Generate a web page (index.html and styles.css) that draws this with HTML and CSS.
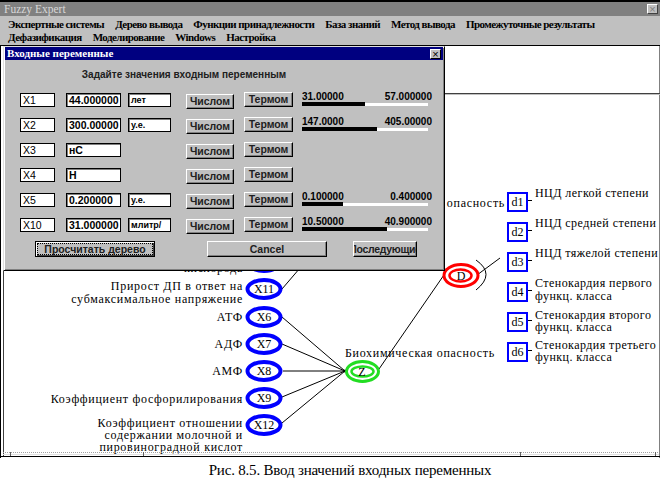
FILE: index.html
```html
<!DOCTYPE html>
<html lang="ru">
<head>
<meta charset="utf-8">
<title>Fuzzy Expert</title>
<link rel="stylesheet" href="styles.css">
</head>
<body>
<div class="app">
  <div class="titlebar">
    <span class="app-title">Fuzzy Expert</span>
    <span class="close-btn">×</span>
  </div>
  <div class="menubar">
    <div class="menu-row">
      <span>Экспертные системы</span>
      <span>Дерево вывода</span>
      <span>Функции принадлежности</span>
      <span>База знаний</span>
      <span>Метод вывода</span>
      <span>Промежуточные результаты</span>
    </div>
    <div class="menu-row">
      <span>Дефазификация</span>
      <span>Моделирование</span>
      <span>Windows</span>
      <span>Настройка</span>
    </div>
  </div>
  <div class="client">
    <svg class="diagram" width="660" height="412" viewBox="0 46 660 412">
      <g class="frame">
        <line x1="0.5" y1="46" x2="0.5" y2="458" stroke="#000"/>
        <line x1="3.5" y1="93" x2="3.5" y2="456" stroke="#404040"/>
        <line x1="659.5" y1="46" x2="659.5" y2="458" stroke="#808080"/>
        <line x1="3" y1="93.5" x2="660" y2="93.5" stroke="#404040"/>
        <line x1="3" y1="94.5" x2="660" y2="94.5" stroke="#c0c0c0"/>
      </g>
      <g class="edges">
        <line x1="282" y1="262" x2="330" y2="215"/>
        <line x1="282" y1="289" x2="330" y2="233"/>
        <line x1="282" y1="317" x2="345" y2="371"/>
        <line x1="282" y1="344" x2="345" y2="371"/>
        <line x1="283" y1="371" x2="345" y2="371"/>
        <line x1="282" y1="397" x2="345" y2="371"/>
        <line x1="282" y1="423" x2="345" y2="371"/>
        <line x1="379" y1="369" x2="446" y2="272"/>
        <line x1="400" y1="215" x2="446" y2="270"/>
        <line x1="477" y1="275" x2="500" y2="258"/>
        <path d="M476 260 Q496 274 476 290"/>
        <line x1="528" y1="200.5" x2="532" y2="200.5"/>
        <line x1="528" y1="230.5" x2="532" y2="230.5"/>
        <line x1="528" y1="260.5" x2="532" y2="260.5"/>
        <line x1="528" y1="290.5" x2="532" y2="290.5"/>
        <line x1="528" y1="320.5" x2="532" y2="320.5"/>
        <line x1="528" y1="350.5" x2="532" y2="350.5"/>
      </g>
      <circle cx="345" cy="371" r="1.5" fill="#000"/>

      <g class="xnodes">
        <ellipse cx="264" cy="262" rx="16.5" ry="9"/>
        <ellipse cx="264" cy="289" rx="16.5" ry="9"/>
        <ellipse cx="264" cy="317" rx="16.5" ry="9"/>
        <ellipse cx="264" cy="344" rx="16.5" ry="9"/>
        <ellipse cx="264" cy="371" rx="16.5" ry="9"/>
        <ellipse cx="264" cy="398" rx="16.5" ry="9"/>
        <ellipse cx="264" cy="425" rx="16.5" ry="9"/>
      </g>
      <g class="node-txt">
        <text x="264" y="293">X11</text>
        <text x="264" y="321">X6</text>
        <text x="264" y="348">X7</text>
        <text x="264" y="375">X8</text>
        <text x="264" y="402">X9</text>
        <text x="264" y="429">X12</text>
      </g>
      <g class="lbl-left">
        <text x="243" y="272">кислорода</text>
        <text x="243" y="290">Прирост ДП в ответ на</text>
        <text x="243" y="303">субмаксимальное напряжение</text>
        <text x="243" y="321">АТФ</text>
        <text x="243" y="348">АДФ</text>
        <text x="243" y="375">АМФ</text>
        <text x="243" y="403">Коэффициент фосфорилирования</text>
        <text x="243" y="427">Коэффициент отношении</text>
        <text x="243" y="439">содержании молочной и</text>
        <text x="243" y="451">пировиноградной кислот</text>
        <text x="505" y="207">Физиологическая опасность</text>
      </g>

      <g class="znode">
        <ellipse cx="362.5" cy="371.5" rx="16" ry="10"/>
        <ellipse class="inner" cx="362.5" cy="371.5" rx="11" ry="5"/>
      </g>
      <text class="node-txt-one" x="362" y="376">Z</text>
      <text class="lbl" x="345" y="357">Биохимическая опасность</text>

      <g class="dnode">
        <ellipse cx="461" cy="275.5" rx="17" ry="11"/>
        <ellipse class="inner" cx="460.5" cy="275.5" rx="11" ry="6"/>
      </g>
      <text class="node-txt-one" x="461" y="280">D</text>

      <g class="dbox">
        <rect x="508" y="193" width="19" height="18"/>
        <rect x="508" y="223" width="19" height="18"/>
        <rect x="508" y="253" width="19" height="18"/>
        <rect x="508" y="283" width="19" height="18"/>
        <rect x="508" y="313" width="19" height="18"/>
        <rect x="508" y="343" width="19" height="18"/>
      </g>
      <g class="node-txt">
        <text x="517.5" y="206">d1</text>
        <text x="517.5" y="236">d2</text>
        <text x="517.5" y="266">d3</text>
        <text x="517.5" y="296">d4</text>
        <text x="517.5" y="326">d5</text>
        <text x="517.5" y="356">d6</text>
      </g>
      <g class="lbl lbl-right">
        <text x="535" y="197">НЦД легкой степени</text>
        <text x="535" y="227">НЦД средней степени</text>
        <text x="535" y="257">НЦД тяжелой степени</text>
        <text x="535" y="287">Стенокардия первого</text>
        <text x="535" y="300">функц. класса</text>
        <text x="535" y="319">Стенокардия второго</text>
        <text x="535" y="331">функц. класса</text>
        <text x="535" y="349">Стенокардия третьего</text>
        <text x="535" y="361">функц. класса</text>
      </g>

      <g class="scroll">
        <line x1="3" y1="452.5" x2="659" y2="452.5" stroke="#a0a0a0" stroke-dasharray="1 1"/>
        <line x1="3" y1="454.5" x2="659" y2="454.5" stroke="#e0e0e0"/>
        <line x1="0" y1="456.5" x2="660" y2="456.5" stroke="#000"/>
        <line x1="10.5" y1="452" x2="10.5" y2="456" stroke="#606060"/>
        <line x1="143.5" y1="452" x2="143.5" y2="456" stroke="#606060"/>
        <line x1="520.5" y1="452" x2="520.5" y2="456" stroke="#606060"/>
        <line x1="655.5" y1="452" x2="655.5" y2="456" stroke="#606060"/>
      </g>
    </svg>

    <div class="dialog">
      <div class="dlg-title">
        <span>Входные переменные</span>
        <span class="dlg-close">×</span>
      </div>
      <div class="dlg-heading">Задайте значения входным переменным</div>
      <div class="var-rows">
        <div class="var-row">
          <span class="field name">X1</span>
          <span class="field value">44.000000</span>
          <span class="field unit">лет</span>
          <span class="btn num">Числом</span>
          <span class="btn term">Термом</span>
          <div class="range">
            <div class="range-vals"><span class="rmin">31.000000</span><span class="rmax">57.000000</span></div>
            <div class="range-bar"><div class="bar-fill" style="width:50%"></div></div>
          </div>
        </div>
        <div class="var-row">
          <span class="field name">X2</span>
          <span class="field value">300.00000</span>
          <span class="field unit">у.е.</span>
          <span class="btn num">Числом</span>
          <span class="btn term">Термом</span>
          <div class="range">
            <div class="range-vals"><span class="rmin">147.00000</span><span class="rmax">405.00000</span></div>
            <div class="range-bar"><div class="bar-fill" style="width:59.5%"></div></div>
          </div>
        </div>
        <div class="var-row">
          <span class="field name">X3</span>
          <span class="field value">нС</span>
          <span class="btn num">Числом</span>
          <span class="btn term">Термом</span>
        </div>
        <div class="var-row">
          <span class="field name">X4</span>
          <span class="field value">Н</span>
          <span class="btn num">Числом</span>
          <span class="btn term">Термом</span>
        </div>
        <div class="var-row">
          <span class="field name">X5</span>
          <span class="field value">0.200000</span>
          <span class="field unit">у.е.</span>
          <span class="btn num">Числом</span>
          <span class="btn term">Термом</span>
          <div class="range">
            <div class="range-vals"><span class="rmin">0.100000</span><span class="rmax">0.400000</span></div>
            <div class="range-bar"><div class="bar-fill" style="width:32.5%"></div></div>
          </div>
        </div>
        <div class="var-row">
          <span class="field name">X10</span>
          <span class="field value">31.000000</span>
          <span class="field unit">млитр/</span>
          <span class="btn num">Числом</span>
          <span class="btn term">Термом</span>
          <div class="range">
            <div class="range-vals"><span class="rmin">10.500000</span><span class="rmax">40.900000</span></div>
            <div class="range-bar"><div class="bar-fill" style="width:67.5%"></div></div>
          </div>
        </div>
      </div>
      <div class="dlg-actions">
        <span class="btn wide default"><span class="focus">Просчитать дерево</span></span>
        <span class="btn wide">Cancel</span>
        <span class="btn next">Последующие</span>
      </div>
    </div>
  </div>
</div>
<div class="caption">Рис. 8.5. Ввод значений входных переменных</div>
</body>
</html>
```

FILE: styles.css
```css
* { box-sizing: border-box; }
html, body { margin: 0; padding: 0; }
body {
  width: 660px;
  height: 483px;
  overflow: hidden;
  background: #fff;
  font-family: "Liberation Serif", serif;
  color: #000;
}

/* ---------- main window ---------- */
.app {
  height: 458px;
  display: flex;
  flex-direction: column;
}
.titlebar {
  height: 16px;
  border-top: 2px solid #000;
  background: #808080;
  display: flex;
  align-items: center;
  justify-content: space-between;
  padding: 0 2px 0 4px;
}
.app-title {
  color: #d8d8d8;
  font-size: 11.5px;
  line-height: 12px;
}
.close-btn {
  width: 11px;
  height: 10px;
  background: #c0c0c0;
  border: 1px solid;
  border-color: #fff #404040 #404040 #fff;
  color: #808080;
  font: 11px/8px "Liberation Sans", sans-serif;
  text-align: center;
}
.menubar {
  height: 30px;
  background: #c0c0c0;
  border-bottom: 1px solid #000;
  padding: 2px 0 0 8px;
  font-size: 11px;
  font-weight: bold;
  letter-spacing: -0.55px;
}
.menu-row {
  display: flex;
  gap: 11px;
  height: 13px;
  line-height: 13px;
  white-space: nowrap;
}
.client {
  position: relative;
  flex: 1;
}
.diagram {
  position: absolute;
  left: 0;
  top: 0;
  display: block;
}

/* ---------- diagram ---------- */
.edges line, .edges path { stroke: #000; stroke-width: 1; fill: none; }
.xnodes ellipse { fill: #fff; stroke: #0000ff; stroke-width: 4; }
.znode ellipse { fill: #fff; stroke: #22dd22; stroke-width: 3; }
.znode .inner { stroke-width: 2.5; }
.dnode ellipse { fill: #fff; stroke: #ff0000; stroke-width: 3; }
.dnode .inner { stroke-width: 2.5; }
.dbox rect { fill: #fff; stroke: #0000ff; stroke-width: 2; }
.node-txt text, .node-txt-one {
  font-family: "Liberation Serif", serif;
  font-size: 12px;
  text-anchor: middle;
  fill: #000;
}
.lbl-left text, .lbl, .lbl text {
  font-family: "Liberation Serif", serif;
  font-size: 12px;
  letter-spacing: 0.7px;
  fill: #000;
}
.lbl-right text { letter-spacing: 0.45px; }
.lbl-left text { text-anchor: end; }

/* ---------- dialog ---------- */
.dialog {
  position: absolute;
  left: 3px;
  top: 0;
  width: 442px;
  height: 225px;
  background: #c0c0c0;
  border: 1px solid;
  border-color: #dfdfdf #000 #000 #dfdfdf;
  box-shadow: inset 1px 1px 0 #fff, inset -1px -1px 0 #808080;
  padding: 0 1px 1px 1px;
  font-family: "Liberation Sans", sans-serif;
}
.dlg-title {
  height: 13px;
  background: #000080;
  color: #fff;
  font: bold 11px/13px "Liberation Serif", serif;
  padding-left: 2px;
  display: flex;
  justify-content: space-between;
  align-items: center;
}
.dlg-close {
  width: 11px;
  height: 10px;
  margin-right: 2px;
  background: #c0c0c0;
  border: 1px solid;
  border-color: #fff #000 #000 #fff;
  color: #000;
  font: 11px/8px "Liberation Sans", sans-serif;
  text-align: center;
}
.dlg-heading {
  margin-top: 8px;
  height: 14px;
  line-height: 14px;
  font-size: 10px;
  font-weight: bold;
  text-align: center;
  padding-right: 80px;
  color: #202020;
}
.var-rows {
  margin-top: 6px;
  padding-left: 15px;
}
.var-row {
  height: 25px;
  display: grid;
  grid-template-columns: 46px 62px 58px 58px 57px 131px;
  align-items: start;
}
.field {
  height: 14px;
  margin-top: 5px;
  background: #fff;
  border: 1px solid #000;
  font-size: 10.5px;
  line-height: 12px;
  padding-left: 2px;
  white-space: nowrap;
  overflow: hidden;
}
.name { grid-column: 1; width: 35px; }
.value { grid-column: 2; width: 55px; font-weight: bold; box-shadow: inset 1px 1px 0 #808080; }
.unit { grid-column: 3; width: 43px; font-weight: bold; font-size: 9px; box-shadow: inset 1px 1px 0 #808080; }
.btn {
  height: 15px;
  background: #c0c0c0;
  border: 1px solid;
  border-color: #fff #000 #000 #fff;
  box-shadow: inset -1px -1px 0 #808080;
  font-size: 10.5px;
  font-weight: bold;
  line-height: 13px;
  color: #202020;
  display: flex;
  justify-content: center;
  white-space: nowrap;
  overflow: hidden;
}
.num { grid-column: 4; width: 48px; margin-top: 6px; }
.term { grid-column: 5; width: 49px; margin-top: 4px; }
.range {
  grid-column: 6;
  margin-top: 3px;
  width: 131px;
}
.range-vals {
  height: 11px;
  display: flex;
  justify-content: space-between;
  font-size: 10px;
  font-weight: bold;
  line-height: 11px;
  padding-left: 1px;
}
.rmin {
  width: 42px;
  overflow: hidden;
  white-space: nowrap;
}
.range-bar {
  margin-left: 1px;
  width: 126px;
  height: 4px;
  background: #fff;
  border-top: 1px solid #c0c0c0;
}
.bar-fill {
  height: 4px;
  margin-top: -1px;
  background: #000;
}
.dlg-actions {
  height: 22px;
  padding-left: 30px;
  display: flex;
  align-items: center;
}
.btn.wide { width: 120px; height: 16px; line-height: 14px; }
.btn.wide + .btn.wide { margin-left: 52px; }
.btn.next { width: 64px; height: 16px; line-height: 14px; margin-left: 26px; letter-spacing: -0.3px; }
.btn.default {
  border: 1px solid #000;
  box-shadow: inset 1px 1px 0 #fff, inset -1px -1px 0 #404040;
  padding: 1px;
}
.focus {
  display: block;
  flex: 1;
  border: 1px dotted #000;
  line-height: 10px;
  text-align: center;
}

/* ---------- caption ---------- */
.caption {
  height: 25px;
  padding-left: 40px;
  text-align: center;
  font-size: 15px;
  line-height: 25px;
  letter-spacing: -0.2px;
}
```
